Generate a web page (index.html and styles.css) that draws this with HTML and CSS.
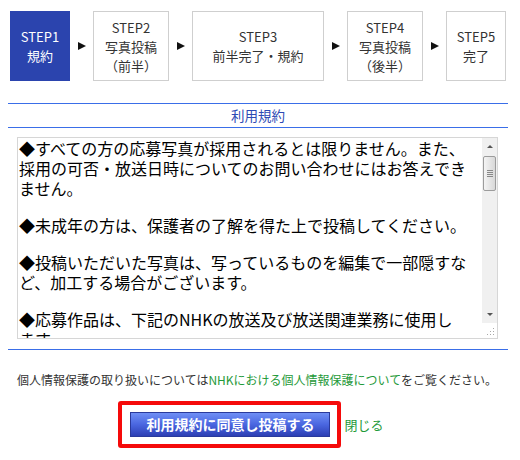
FILE: index.html
```html
<!DOCTYPE html>
<html lang="ja">
<head>
  <meta charset="UTF-8" />
  <title>利用規約</title>
  <link rel="stylesheet" href="styles.css">
</head>
<body>
  <div class="page">
    <ol class="steps">
      <li class="step step-current step-w1">STEP1<br>規約</li>
      <li class="step-arrow"></li>
      <li class="step step-w2">STEP2<br>写真投稿<br>（前半）</li>
      <li class="step-arrow"></li>
      <li class="step step-w3">STEP3<br>前半完了・規約</li>
      <li class="step-arrow"></li>
      <li class="step step-w2">STEP4<br>写真投稿<br>（後半）</li>
      <li class="step-arrow"></li>
      <li class="step step-w1">STEP5<br>完了</li>
    </ol>

    <h2 class="section-title">利用規約</h2>

    <div class="terms">
      <div class="terms-body">
        <p>◆すべての方の応募写真が採用されるとは限りません。また、採用の可否・放送日時についてのお問い合わせにはお答えできません。</p>
        <p>◆未成年の方は、保護者の了解を得た上で投稿してください。</p>
        <p>◆投稿いただいた写真は、写っているものを編集で一部隠すなど、加工する場合がございます。</p>
        <p>◆応募作品は、下記のNHKの放送及び放送関連業務に使用します。</p>
      </div>
      <div class="scrollbar">
        <div class="scroll-btn"><span class="tri-up"></span></div>
        <div class="scroll-thumb"><span class="grip"></span></div>
        <div class="scroll-track"></div>
        <div class="scroll-btn"><span class="tri-down"></span></div>
        <div class="resizer">
          <svg width="15" height="15" viewBox="0 0 15 15">
            <g fill="#a8a8a8">
              <rect x="11" y="5" width="1" height="1"/>
              <rect x="8" y="8" width="1" height="1"/>
              <rect x="11" y="8" width="1" height="1"/>
              <rect x="5" y="11" width="1" height="1"/>
              <rect x="8" y="11" width="1" height="1"/>
              <rect x="11" y="11" width="1" height="1"/>
            </g>
          </svg>
        </div>
      </div>
    </div>

    <hr class="rule">

    <p class="privacy">個人情報保護の取り扱いについては<a href="#">NHKにおける個人情報保護について</a>をご覧ください。</p>

    <div class="actions">
      <div class="agree-frame">
        <button class="agree-button">利用規約に同意し投稿する</button>
      </div>
      <a class="close-link" href="#">閉じる</a>
    </div>
  </div>
</body>
</html>
```

FILE: styles.css
```css
body {
  margin: 8px;
  background: #fff;
  font-family: "Noto Sans CJK JP", "Noto Sans", sans-serif;
  color: #333;
}

.page {
  width: 500px;
}

/* step indicator */
.steps {
  list-style: none;
  margin: 3px 0 0;
  padding: 0 0 0 2px;
  display: flex;
  align-items: center;
  gap: 7.5px;
}

.step {
  box-sizing: border-box;
  height: 70px;
  border: 1px solid #cfcfcf;
  display: flex;
  align-items: center;
  justify-content: center;
  text-align: center;
  font-size: 13px;
  line-height: 19px;
  color: #333;
}

.step-w1 { width: 60px; }
.step-w2 { width: 76px; }
.step-w3 { width: 132px; }

.step-current {
  background: #2b44ae;
  border-color: #2b44ae;
  color: #fff;
}

.step-arrow {
  width: 0;
  height: 0;
  border-left: 8px solid #111;
  border-top: 4.5px solid transparent;
  border-bottom: 4.5px solid transparent;
}

/* title */
.section-title {
  margin: 22px 0 0;
  border-top: 1px solid #3a6ee8;
  border-bottom: 1px solid #3a6ee8;
  height: 23px;
  line-height: 23px;
  text-align: center;
  font-size: 13.5px;
  font-weight: normal;
  color: #2d4ab4;
}

/* terms box */
.terms {
  margin: 9px 10px 0 9px;
  height: 202px;
  box-sizing: border-box;
  border: 1px solid #d6d6d6;
  display: flex;
}

.terms-body {
  flex: 1;
  overflow: hidden;
  padding: 0 14px 0 1px;
  font-size: 16px;
  line-height: 20px;
  color: #000;
}

.terms-body p {
  margin: 0 0 17px;
}

.scrollbar {
  width: 15px;
  flex-shrink: 0;
  background: #f0f0f0;
  display: flex;
  flex-direction: column;
}

.scroll-btn {
  height: 17px;
  display: flex;
  align-items: center;
  justify-content: center;
}

.tri-up,
.tri-down {
  width: 0;
  height: 0;
  border-left: 3px solid transparent;
  border-right: 3px solid transparent;
}

.tri-up { border-bottom: 3px solid #555; }
.tri-down { border-top: 3px solid #555; }

.scroll-thumb {
  margin: 1px 1px 0;
  height: 35px;
  box-sizing: border-box;
  border: 1px solid #9c9c9c;
  border-radius: 2px;
  background: linear-gradient(to right, #f4f4f4, #e6e6e6 50%, #d8d8d8);
  display: flex;
  align-items: center;
  justify-content: center;
}

.grip {
  width: 6px;
  height: 7px;
  background: repeating-linear-gradient(to bottom, #888 0 1px, transparent 1px 2px);
}

.scroll-track {
  flex: 1;
}

.resizer {
  height: 15px;
  background: #fff;
}

.resizer svg {
  display: block;
}

.rule {
  margin: 10px 0 0;
  border: none;
  border-top: 1px solid #3a6ee8;
  height: 0;
}

/* footer */
.privacy {
  margin: 22px 0 0 9px;
  font-size: 12px;
  line-height: 16px;
  color: #333;
}

.privacy a,
.close-link {
  color: #1f9a3a;
  text-decoration: none;
}

.actions {
  margin-top: 13px;
  display: flex;
  align-items: center;
  justify-content: center;
  gap: 3px;
  padding-right: 14px;
}

.agree-frame {
  border: 4px solid #f50a0a;
  border-radius: 3px;
  padding: 6px 7px 7px 8px;
}

.agree-button {
  width: 200px;
  height: 25px;
  border: 1px solid #2a3a9c;
  background: linear-gradient(to bottom, #6f8ff5, #4a66e0 50%, #2d3fb4);
  color: #fff;
  font-family: "Noto Sans CJK JP", sans-serif;
  font-size: 14px;
  font-weight: bold;
  padding: 0;
  cursor: pointer;
}

.close-link {
  font-size: 13px;
}
```
